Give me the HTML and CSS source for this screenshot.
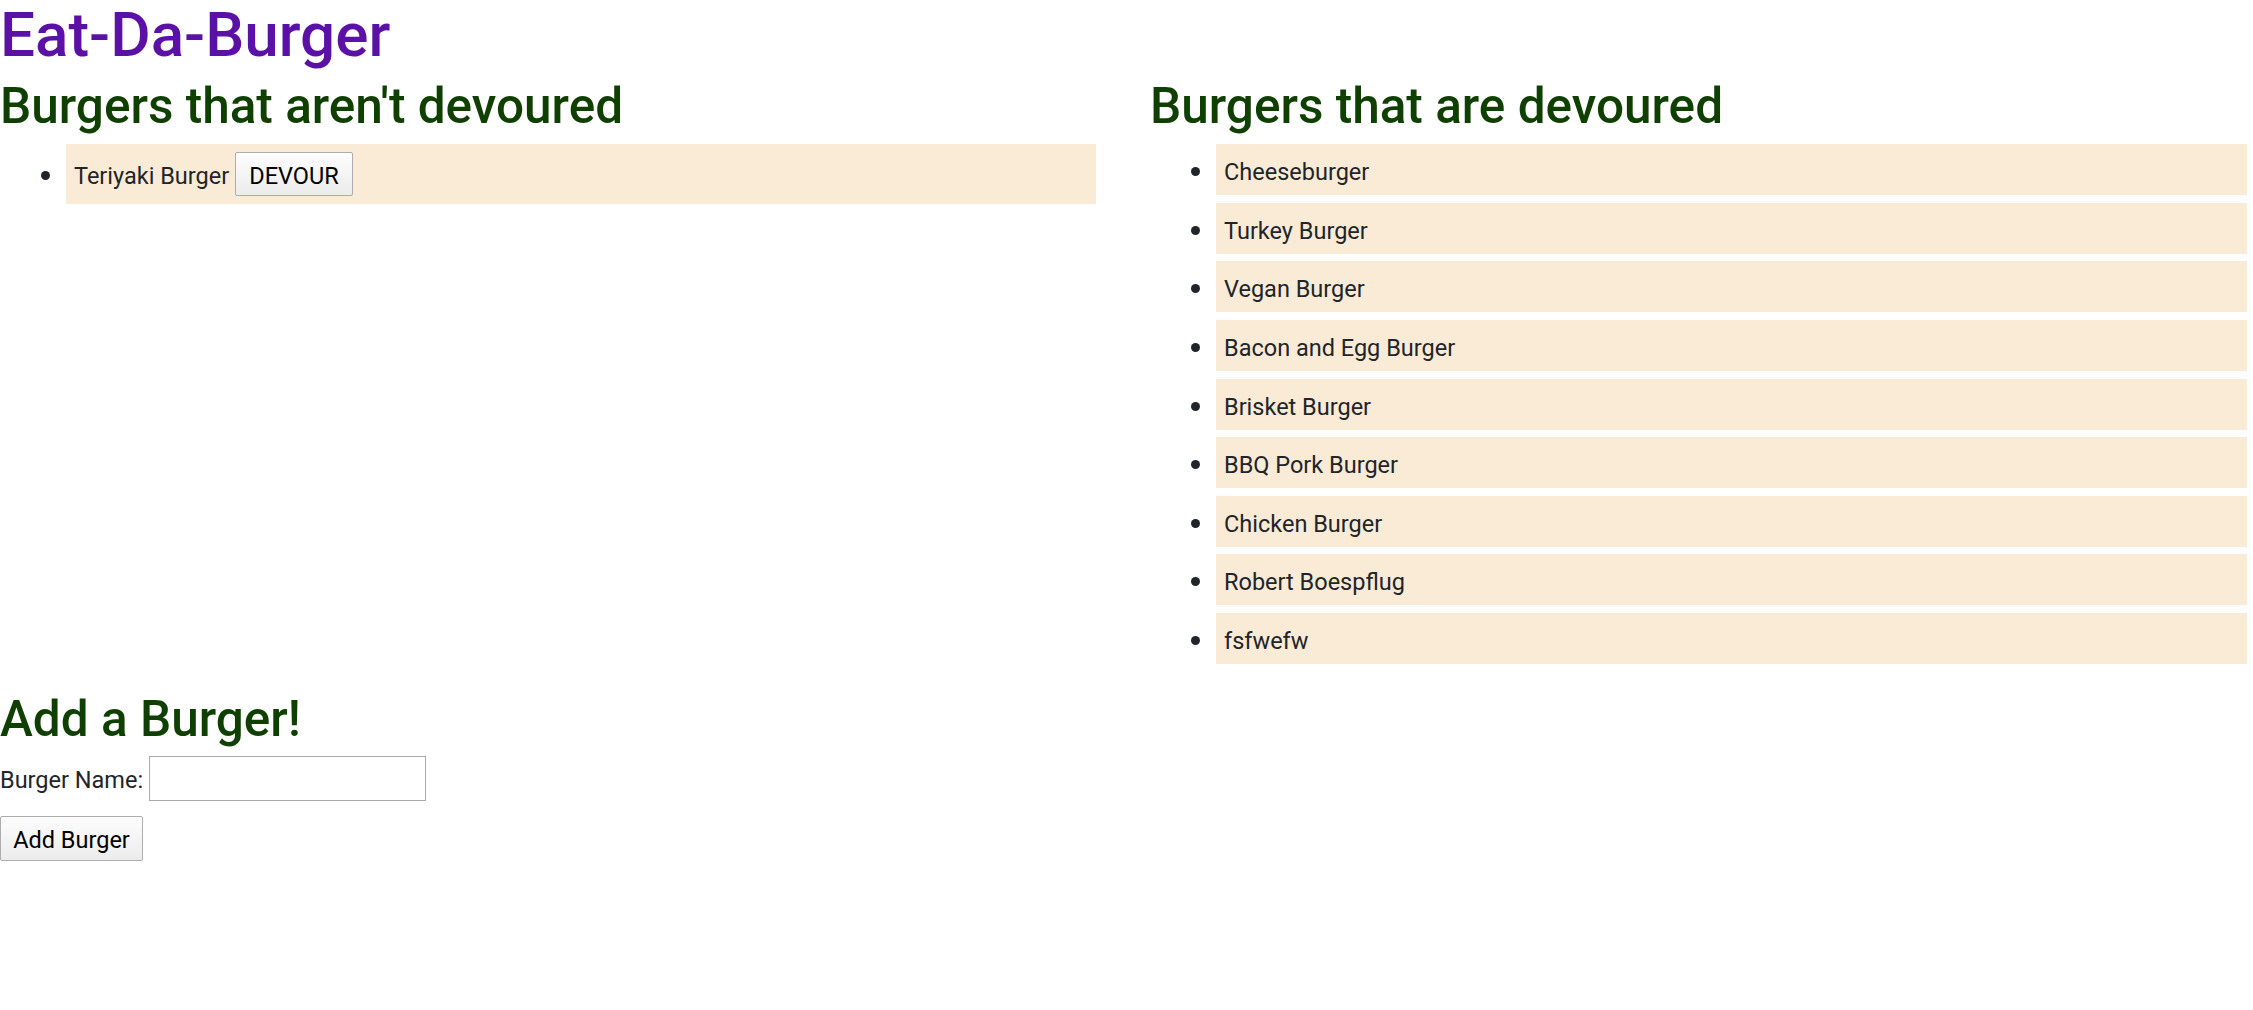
FILE: index.html
```html
<!DOCTYPE html>
<html lang="en">
<head>
<meta charset="utf-8">
<title>Eat-Da-Burger</title>
<link rel="stylesheet" href="styles.css">
</head>
<body>
  <h1 class="title">Eat-Da-Burger</h1>
  <div class="columns">
    <section class="column">
      <h2 class="heading">Burgers that aren't devoured</h2>
      <ul class="burger-list">
        <li class="burger burger-pending">Teriyaki Burger <button class="btn btn-devour" type="button">DEVOUR</button></li>
      </ul>
    </section>
    <section class="column">
      <h2 class="heading">Burgers that are devoured</h2>
      <ul class="burger-list">
        <li class="burger">Cheeseburger</li>
        <li class="burger">Turkey Burger</li>
        <li class="burger">Vegan Burger</li>
        <li class="burger">Bacon and Egg Burger</li>
        <li class="burger">Brisket Burger</li>
        <li class="burger">BBQ Pork Burger</li>
        <li class="burger">Chicken Burger</li>
        <li class="burger">Robert Boespflug</li>
        <li class="burger">fsfwefw</li>
      </ul>
    </section>
  </div>
  <h2 class="heading heading-add">Add a Burger!</h2>
  <form class="add-form">
    <div class="form-row">
      <label class="label" for="burger-name">Burger Name:</label>
      <input class="text-input" id="burger-name" type="text">
    </div>
    <button class="btn btn-add" type="button">Add Burger</button>
  </form>
</body>
</html>
```

FILE: styles.css
```css
html, body {
  margin: 0;
  padding: 0;
  background: #ffffff;
}

body {
  font-family: Roboto, "Open Sans", "Liberation Sans", sans-serif;
  font-size: 23.5px;
  color: #212529;
}

.title {
  margin: 0;
  font-size: 62px;
  font-weight: 500;
  line-height: 69px;
  color: #5b10a6;
}

.columns {
  display: grid;
  grid-template-columns: 1096px 1097px;
  column-gap: 54px;
  margin-top: 9px;
}

.column {
  min-width: 0;
}

.heading {
  margin: 0;
  font-size: 49.5px;
  font-weight: 500;
  line-height: 57.6px;
  color: #103f02;
}

.burger-list {
  margin: 8.6px 0 0 0;
  padding: 0 0 0 66px;
}

.burger {
  box-sizing: border-box;
  height: 51px;
  background: #faebd7;
  padding: 8px 8px 0 8px;
  line-height: 35px;
  margin-bottom: 7.6px;
  overflow: visible;
}

.burger::marker {
  font-size: 30px;
  color: #212529;
}

.burger-pending {
  height: 60px;
  padding: 8px 8px;
}

.btn {
  font-family: inherit;
  font-size: 23.5px;
  color: #000;
  background: linear-gradient(#fdfdfd, #ececec);
  border: 1px solid #adadad;
  border-radius: 2px;
  padding: 0;
  margin: 0;
  box-sizing: border-box;
}

.btn-devour {
  width: 118px;
  height: 44px;
  padding-top: 3px;
  vertical-align: baseline;
}

.heading-add {
  margin-top: 19.4px;
}

.add-form {
  margin-top: 7.6px;
  display: flex;
  flex-direction: column;
  align-items: flex-start;
  gap: 15px;
}

.form-row {
  display: flex;
  align-items: center;
  gap: 6px;
}

.label {
  line-height: 35px;
  padding-top: 4px;
}

.text-input {
  width: 277px;
  height: 45px;
  box-sizing: border-box;
  border: 1px solid #a9a9a9;
  border-radius: 0;
  font-family: inherit;
  font-size: 23.5px;
  margin: 0;
  padding: 2px 4px;
}

.btn-add {
  width: 143px;
  height: 45px;
  padding-top: 3px;
}
```
